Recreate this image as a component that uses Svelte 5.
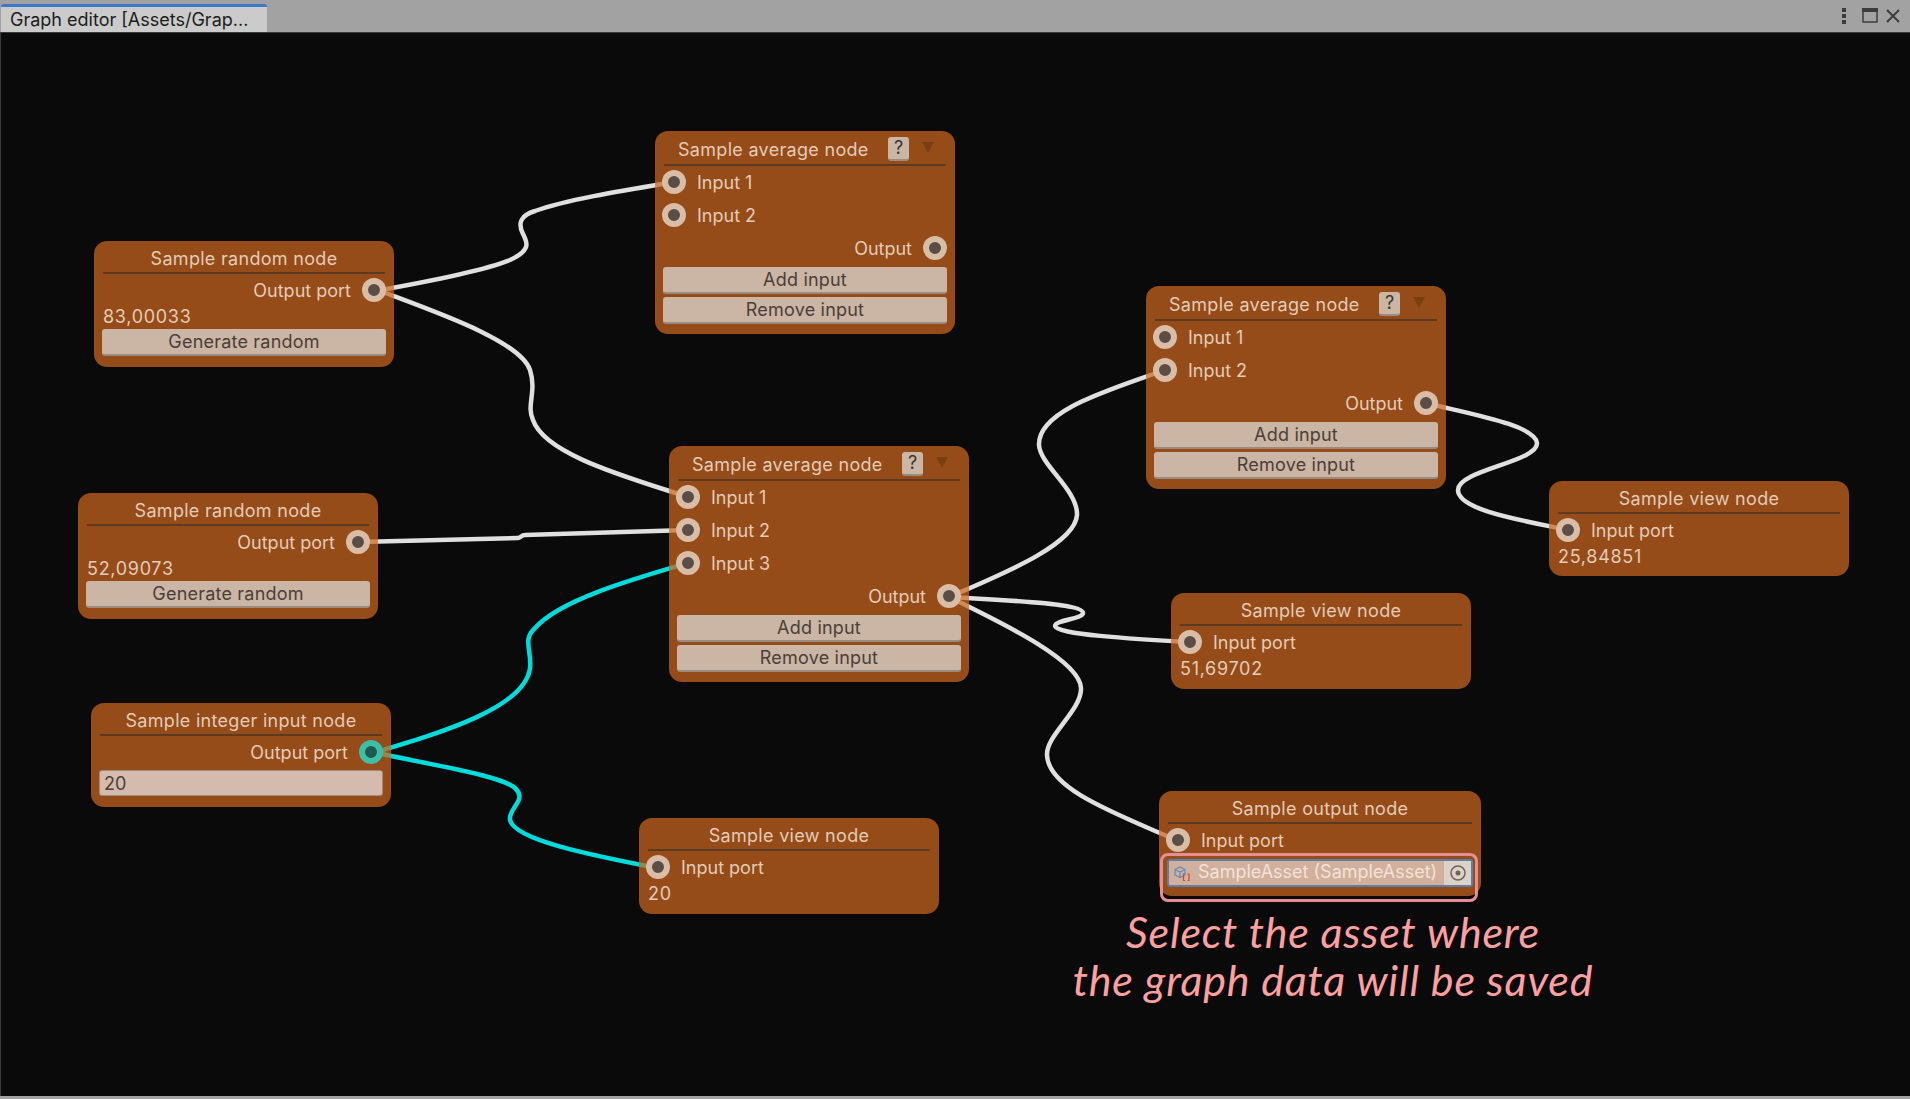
<script>
  // canvas starts under the 33px title bar, node y values are page coordinates
  const TOP = 33;

  const avgRows = (inputs) => [
    ...inputs.map((label) => ({ kind: 'in', label })),
    { kind: 'out', label: 'Output' },
    { kind: 'button', label: 'Add input' },
    { kind: 'button', label: 'Remove input' }
  ];

  const viewRows = (value) => [
    { kind: 'in', label: 'Input port' },
    { kind: 'value', label: value }
  ];

  const randomRows = (value) => [
    { kind: 'out', label: 'Output port' },
    { kind: 'value', label: value },
    { kind: 'button', label: 'Generate random' }
  ];

  const nodes = [
    { x: 94, y: 241, w: 300, h: 126, title: 'Sample random node', rows: randomRows('83,00033') },
    { x: 78, y: 493, w: 300, h: 126, title: 'Sample random node', rows: randomRows('52,09073') },
    {
      x: 91, y: 703, w: 300, h: 104, title: 'Sample integer input node', teal: true,
      rows: [{ kind: 'out', label: 'Output port' }, { kind: 'field', label: '20' }]
    },
    { x: 655, y: 131, w: 300, h: 203, title: 'Sample average node', help: true, rows: avgRows(['Input 1', 'Input 2']) },
    { x: 669, y: 446, w: 300, h: 236, title: 'Sample average node', help: true, rows: avgRows(['Input 1', 'Input 2', 'Input 3']) },
    { x: 1146, y: 286, w: 300, h: 203, title: 'Sample average node', help: true, rows: avgRows(['Input 1', 'Input 2']) },
    { x: 1549, y: 481, w: 300, h: 95, title: 'Sample view node', rows: viewRows('25,84851') },
    { x: 1171, y: 593, w: 300, h: 96, title: 'Sample view node', rows: viewRows('51,69702') },
    { x: 639, y: 818, w: 300, h: 96, title: 'Sample view node', rows: viewRows('20') },
    {
      x: 1159, y: 791, w: 322, h: 105, title: 'Sample output node', highlight: true,
      rows: [{ kind: 'in', label: 'Input port' }, { kind: 'asset', label: 'SampleAsset (SampleAsset)' }]
    }
  ];

  const whiteWires = [
    'M375 291 C420 283 480 272 510 260 C532 250 527 242 523 234 C517 222 522 215 535 211 C565 200 620 191 674 182',
    'M375 289 C430 310 520 340 530 370 C537 392 526 405 533 420 C545 455 630 478 688 497',
    'M358 542 L518 538 C521 538 521 535 525 535 L688 530',
    'M949 597 C1000 575 1075 545 1077 515 C1078 490 1040 465 1039 445 C1038 410 1110 390 1165 370',
    'M1426 403 C1470 414 1535 425 1537 443 C1538 462 1458 470 1458 490 C1458 510 1520 520 1568 530',
    'M949 597 C1000 600 1083 603 1083 613 C1083 619 1055 620 1055 626 C1055 634 1130 639 1191 642',
    'M949 597 C1000 622 1080 660 1081 688 C1082 710 1046 735 1047 755 C1048 790 1120 815 1178 841'
  ];

  const cyanWires = [
    'M373 753 C440 733 525 708 530 668 C532 650 522 640 535 628 C560 600 630 580 688 563',
    'M373 752 C430 765 500 775 515 788 C528 800 508 808 510 820 C515 840 590 855 657 868'
  ];
</script>

<div class="window">
  <div class="titlebar">
    <div class="tab">Graph editor [Assets/Grap...</div>
    <div class="controls">
      <svg width="66" height="32" viewBox="0 0 66 32">
        <rect x="1" y="8" width="4" height="4" fill="#3c3c3c" />
        <rect x="1" y="14" width="4" height="4" fill="#3c3c3c" />
        <rect x="1" y="20" width="4" height="4" fill="#3c3c3c" />
        <rect x="22" y="9" width="14" height="13" fill="none" stroke="#3c3c3c" stroke-width="1.5" />
        <rect x="21" y="8" width="16" height="4" fill="#3c3c3c" />
        <path d="M46 10 L58 22 M58 10 L46 22" stroke="#3c3c3c" stroke-width="2" fill="none" />
      </svg>
    </div>
  </div>

  <div class="canvas">
    <svg class="wires" width="1910" height="1063" viewBox="0 33 1910 1063">
      {#each whiteWires as d}
        <path {d} stroke="#e0e0e0" />
      {/each}
      {#each cyanWires as d}
        <path {d} stroke="#00dcdc" />
      {/each}
    </svg>

    {#each nodes as node}
      <div
        class="node"
        class:teal={node.teal}
        style="left:{node.x}px;top:{node.y - TOP}px;width:{node.w}px;height:{node.h}px"
      >
        {#if node.help}
          <div class="header with-help">
            <span class="title">{node.title}</span>
            <span class="help">?</span>
            <span class="arrow"></span>
          </div>
        {:else}
          <div class="header">{node.title}</div>
        {/if}

        {#each node.rows as row}
          {#if row.kind === 'in'}
            <div class="port-row"><span class="port"></span><span>{row.label}</span></div>
          {:else if row.kind === 'out'}
            <div class="port-row out"><span>{row.label}</span><span class="port"></span></div>
          {:else if row.kind === 'value'}
            <div class="value">{row.label}</div>
          {:else if row.kind === 'button'}
            <div class="btn">{row.label}</div>
          {:else if row.kind === 'field'}
            <div class="field">{row.label}</div>
          {:else if row.kind === 'asset'}
            <div class="asset">
              <svg class="asset-icon" width="17" height="17" viewBox="0 0 17 17">
                <path d="M1 4.5 L6 2 L11 4.5 L11 10 L6 12.5 L1 10 Z M1 4.5 L6 7 L11 4.5 M6 7 L6 12.5" fill="none" stroke="#5d8fc4" stroke-width="1.2" />
                <path d="M11 9 H9.5 V15.5 H11 M13.5 9 H15 V15.5 H13.5" fill="none" stroke="#c8483c" stroke-width="1.2" />
              </svg>
              <span class="asset-name">{row.label}</span>
              <span class="picker">
                <svg width="18" height="18" viewBox="0 0 18 18">
                  <circle cx="9" cy="9" r="7" fill="none" stroke="#6a625c" stroke-width="1.5" />
                  <circle cx="9" cy="9" r="2.5" fill="#6a625c" />
                </svg>
              </span>
            </div>
          {/if}
        {/each}

        {#if node.highlight}
          <div class="highlight"></div>
        {/if}
      </div>
    {/each}

    <div class="note">Select the asset where<br />the graph data will be saved</div>
  </div>
</div>

<style>
  :global(body) {
    margin: 0;
    overflow: hidden;
    font-family: Inter, "Liberation Sans", sans-serif;
  }

  .window {
    width: 1910px;
    height: 1099px;
    display: flex;
    flex-direction: column;
    background: #a2a2a2;
  }

  .titlebar {
    height: 32px;
    flex: none;
    display: flex;
    justify-content: space-between;
    align-items: flex-end;
    background: #a2a2a2;
    border-bottom: 1px solid #3a3a3a;
  }

  .tab {
    width: 257px;
    height: 25px;
    margin-left: 1px;
    padding-left: 9px;
    background: #cbcbcb;
    border-top: 3px solid #3a78c8;
    border-radius: 3px 3px 0 0;
    color: #1c1c1c;
    font-size: 18px;
    letter-spacing: 0;
    line-height: 25px;
    white-space: nowrap;
  }

  .controls {
    height: 32px;
    margin-right: 3px;
  }

  .controls svg {
    display: block;
  }

  .canvas {
    position: relative;
    flex: 1;
    background: #0a0a0a;
    border-left: 1px solid #3c3c3c;
    margin-bottom: 3px;
  }

  .wires {
    position: absolute;
    left: -1px;
    top: 0;
  }

  .wires path {
    fill: none;
    stroke-width: 4.5;
    stroke-linecap: round;
  }

  .node {
    position: absolute;
    margin-left: -1px;
    box-sizing: border-box;
    padding: 0 8px;
    border-radius: 13px;
    background: rgba(204, 102, 31, 0.72);
    color: #e4cbb8;
    font-size: 18px;
    letter-spacing: 0;
  }

  .header {
    height: 33px;
    box-sizing: border-box;
    margin: 0 1px;
    padding-top: 5px;
    border-bottom: 2px solid #5c3a22;
    text-align: center;
    letter-spacing: 0.3px;
    line-height: 26px;
    white-space: nowrap;
  }

  .with-help {
    height: 35px;
    padding-top: 6px;
    display: flex;
    align-items: flex-start;
    text-align: left;
  }

  .title {
    margin-left: 14px;
    line-height: 25px;
  }

  .help {
    margin-left: auto;
    width: 21px;
    height: 24px;
    box-sizing: border-box;
    border-radius: 3px;
    border-bottom: 2px solid #9a8b80;
    background: #cbb5a4;
    color: #3c3430;
    text-align: center;
    font-size: 18px;
    letter-spacing: 0;
    line-height: 22px;
  }

  .arrow {
    width: 0;
    height: 0;
    margin: 5px 12px 0 13px;
    border-left: 6.5px solid transparent;
    border-right: 6.5px solid transparent;
    border-top: 11px solid #78400f;
  }

  .port-row {
    height: 33px;
    display: flex;
    align-items: center;
    gap: 11px;
    margin-left: -1px;
  }

  .port-row.out {
    justify-content: flex-end;
    margin-left: 0;
  }

  .port {
    width: 24px;
    height: 24px;
    margin-bottom: 1px;
    box-sizing: border-box;
    border: 6px solid rgba(225, 195, 172, 0.95);
    border-radius: 50%;
    background: #5a4d45;
  }

  .teal .port {
    border-color: #3cbfa6;
    background: #1d5a52;
  }

  .value {
    height: 20px;
    padding-left: 1px;
    letter-spacing: 0.7px;
    line-height: 20px;
  }

  .btn {
    height: 27px;
    box-sizing: border-box;
    margin-top: 2px;
    border-radius: 3px;
    border-bottom: 2px solid #9a8b80;
    background: #cbb5a4;
    color: #4a3f38;
    text-align: center;
    letter-spacing: 0.2px;
    line-height: 25px;
  }

  .btn + .btn {
    margin-top: 3px;
  }

  .field {
    height: 26px;
    box-sizing: border-box;
    margin-top: 1px;
    padding-left: 4px;
    border-radius: 3px;
    border: 1px solid #a08a7c;
    background: #d4bbad;
    color: #4a3f38;
    line-height: 25px;
  }

  .asset {
    height: 28px;
    box-sizing: border-box;
    margin-top: 2px;
    display: flex;
    align-items: center;
    border: 2px solid #5d7fa8;
    border-radius: 3px;
    background: #d2b09e;
    color: #f2e2d6;
    white-space: nowrap;
  }

  .asset-icon {
    margin-left: 5px;
    flex: none;
  }

  .asset-name {
    margin-left: 7px;
    padding-bottom: 3px;
    letter-spacing: 0;
  }

  .picker {
    margin-left: auto;
    width: 27px;
    height: 24px;
    display: flex;
    align-items: center;
    justify-content: center;
    background: #dcd2c8;
  }

  .highlight {
    position: absolute;
    left: 1px;
    top: 62px;
    width: 318px;
    height: 49px;
    box-sizing: border-box;
    border: 3px solid #e58f95;
    border-radius: 8px;
  }

  .note {
    position: absolute;
    left: 1032px;
    top: 875px;
    width: 600px;
    text-align: center;
    color: #ffa0a0;
    font-family: "Comic Sans MS", Lato, cursive;
    font-style: italic;
    font-size: 43px;
    letter-spacing: 0.8px;
    line-height: 48px;
    white-space: nowrap;
  }
</style>
